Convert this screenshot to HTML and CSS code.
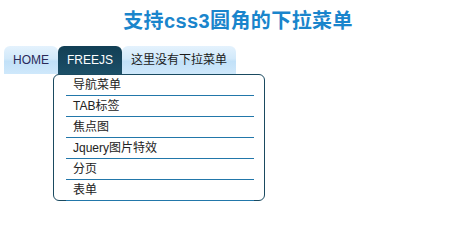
FILE: index.html
```html
<!DOCTYPE html>
<html>
<head>
<meta charset="utf-8">
<link rel="stylesheet" href="styles.css">
</head>
<body>
<h1 class="title">支持css3圆角的下拉菜单</h1>
<div class="menu">
  <ul class="nav">
    <li class="tab"><a>HOME</a></li>
    <li class="tab active"><a>FREEJS</a></li>
    <li class="tab"><a>这里没有下拉菜单</a></li>
  </ul>
  <ul class="drop">
    <li>导航菜单</li>
    <li>TAB标签</li>
    <li>焦点图</li>
    <li>Jquery图片特效</li>
    <li>分页</li>
    <li>表单</li>
  </ul>
</div>
</body>
</html>
```
FILE: styles.css
```css
html, body {
  margin: 0;
  padding: 0;
  background: #fff;
  font-family: "Liberation Sans", "Noto Sans CJK SC", sans-serif;
}
.title {
  margin: 0;
  padding: 8px 0 0 26px;
  height: 38px;
  box-sizing: border-box;
  line-height: 26px;
  font-size: 20px;
  font-weight: bold;
  letter-spacing: 0.4px;
  color: #1a85cc;
  text-align: center;
}
.menu {
  margin-top: 8px;
}
.nav {
  list-style: none;
  margin: 0;
  padding: 0 0 0 4px;
  display: flex;
}
.tab {
  height: 28px;
  line-height: 29px;
  font-size: 12px;
  border-radius: 6px 6px 0 0;
  background: linear-gradient(#e4f2fd 0%, #d2e9fa 45%, #c2e1f8 55%, #cfe8fb 100%);
  color: #1a1a1a;
}
.tab a {
  display: block;
  padding: 0 9px;
}
.tab:first-child a { color: #2a2a5a; }
.tab.active {
  background: linear-gradient(#123f55 0%, #17465e 50%, #1c5068 100%);
  color: #fff;
}
.drop {
  width: 212px;
  box-sizing: border-box;
  list-style: none;
  margin: 0 0 0 53px;
  padding: 0 10px 0 12px;
  border: 1px solid #1a4a60;
  border-radius: 6px;
  background: #fff;
}
.drop li {
  height: 20px;
  line-height: 20px;
  padding-left: 7px;
  border-bottom: 1px solid #2277aa;
  color: #222;
  font-size: 12px;
  white-space: nowrap;
}
.drop li:last-child {
  margin-bottom: -1px;
}
```
